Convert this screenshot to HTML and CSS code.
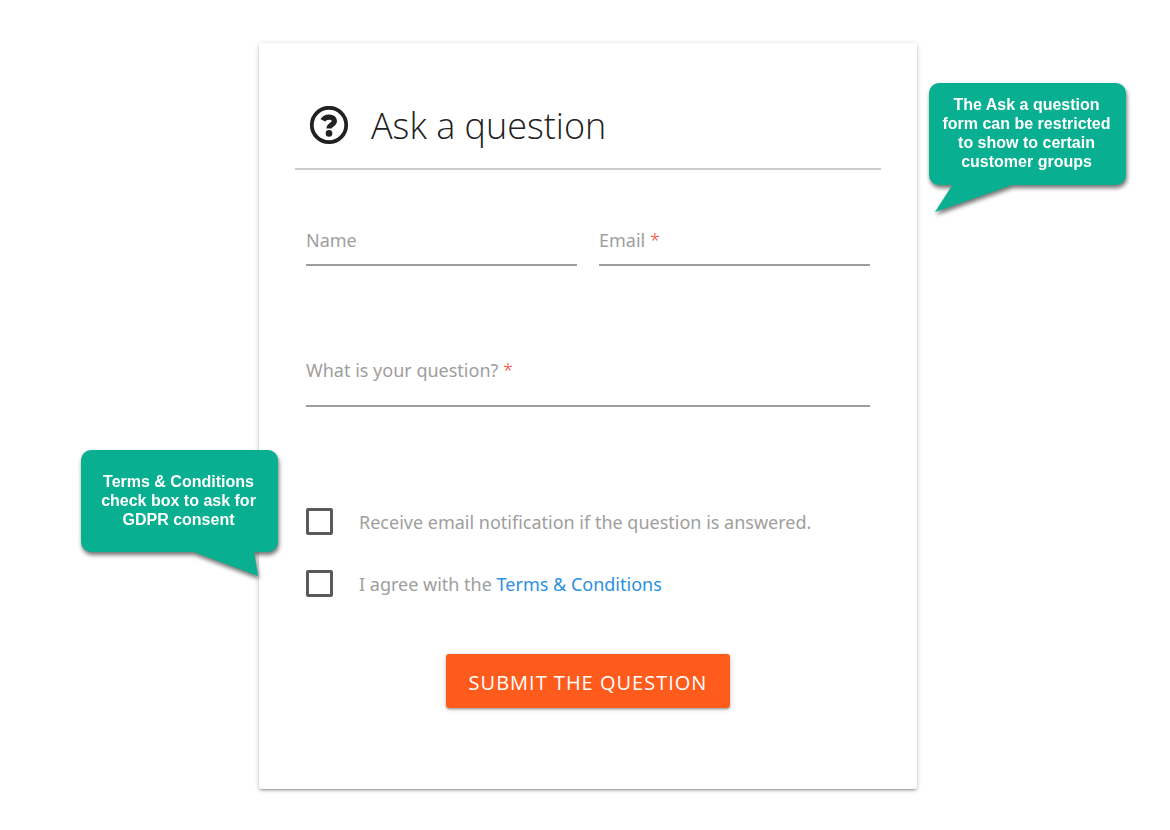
FILE: index.html
```
<!DOCTYPE html>
<html lang="en">
<head>
    <meta charset="UTF-8">
    <meta name="viewport" content="width=device-width, initial-scale=1.0">
    <title>Ask a question</title>
    <link rel="stylesheet" href="styles.css">
</head>
<body>
    <main class="stage">
        <form class="card">
            <h1 class="header">
                <svg class="header-icon" viewBox="0 0 40 40" aria-hidden="true">
                    <circle cx="20" cy="19" r="17.2" fill="none" stroke="#212121" stroke-width="3.8"/>
                    <path d="M13.9 14.4C15.2 11.8 17.2 11.1 20 11.1C23.4 11.1 25.4 12.6 25.4 15C25.4 18.8 20 18.4 20 22.6" fill="none" stroke="#212121" stroke-width="5.2"/>
                    <circle cx="20" cy="27.4" r="3.3" fill="#212121"/>
                </svg>
                Ask a question
            </h1>

            <div class="fields">
                <div class="form-row">
                    <div class="form-group">
                        <label for="name">Name</label>
                        <input type="text" id="name">
                    </div>
                    <div class="form-group">
                        <label for="email">Email <span class="required">*</span></label>
                        <input type="email" id="email">
                    </div>
                </div>
                <div class="form-group">
                    <label for="question">What is your question? <span class="required">*</span></label>
                    <textarea id="question" rows="1"></textarea>
                </div>

                <div class="checks">
                    <div class="check">
                        <input type="checkbox" id="notify">
                        <label for="notify">Receive email notification if the question is answered.</label>
                    </div>
                    <div class="check">
                        <input type="checkbox" id="terms">
                        <label for="terms">I agree with the <a href="#terms">Terms &amp; Conditions</a></label>
                    </div>
                </div>

                <button type="submit">SUBMIT THE QUESTION</button>
            </div>
        </form>

        <aside class="callout callout-groups">The Ask a question<br>form can be restricted<br>to show to certain<br>customer groups</aside>
        <aside class="callout callout-gdpr">Terms &amp; Conditions<br>check box to ask for<br>GDPR consent</aside>
    </main>
</body>
</html>
```
FILE: styles.css
```
* { box-sizing: border-box; }
body { margin: 0; padding: 43px 0 40px 6px; background: #fff; color: #9e9e9e; font-family: "Segoe UI", "Noto Sans", sans-serif; font-size: 18px; line-height: 24px; }
.stage { position: relative; max-width: 658px; margin: 0 auto; }

.card { padding: 48px 36px 81px; background: #fff; border-radius: 3px; box-shadow: 0 2px 2px rgba(0,0,0,0.14), 0 3px 1px -2px rgba(0,0,0,0.12), 0 1px 5px rgba(0,0,0,0.2); }
.header { display: flex; align-items: center; gap: 22px; height: 79px; margin: 0; padding: 0 0 7px 14px; border-bottom: 2px solid #ccc; color: #212121; font-family: "Segoe UI", "Open Sans", sans-serif; font-size: 36px; font-weight: 300; line-height: 48px; }
.header-icon { width: 40px; height: 40px; }

.fields { padding: 46px 11px 0; }
.form-row { display: flex; gap: 22px; margin-bottom: 80px; }
.form-group { position: relative; flex: 1; }
.form-group label { position: absolute; top: 12px; left: 0; cursor: text; }
.form-group input, .form-group textarea { display: block; width: 100%; height: 50px; padding: 12px 0; border: 0; border-bottom: 2px solid #9e9e9e; border-radius: 0; outline: none; background: transparent; font: inherit; resize: none; overflow: hidden; }
.form-group textarea { height: 61px; }
.required { color: #f44336; font-weight: 300; }

.checks { display: grid; gap: 34px; margin: 100px 0 57px; }
.check { display: flex; align-items: center; gap: 26px; height: 28px; }
.check label { padding-top: 2px; }
.check input { appearance: none; width: 27px; height: 27px; margin: 0; border: 3px solid #5a5a5a; border-radius: 2px; }
.check input:checked { background: #5a5a5a; }
a { color: #2b90e0; text-decoration: none; }

button { display: block; height: 54px; margin: 0 auto; padding: 2px 23px 0; border: 0; border-radius: 3px; background: #ff5b1d; color: #fff; font-family: "Segoe UI", "Open Sans", sans-serif; font-size: 20px; letter-spacing: 1px; cursor: pointer; box-shadow: 0 2px 2px rgba(0,0,0,0.14), 0 3px 1px -2px rgba(0,0,0,0.12), 0 1px 5px rgba(0,0,0,0.2); }
button:hover { background: #ff6d35; }

.callout { position: absolute; display: flex; align-items: center; justify-content: center; width: 197px; height: 102px; padding: 0 2px 2px 0; border-radius: 10px; background: #08af90; color: #fff; font: bold 16px/19px "Liberation Sans", Arial, sans-serif; text-align: center; filter: drop-shadow(1px 3px 2px rgba(0,0,0,0.55)); }
.callout::after { content: ""; position: absolute; top: 101px; background: #08af90; }
.callout-groups { top: 40px; left: 670px; }
.callout-groups::after { left: 6px; width: 80px; height: 28px; clip-path: polygon(18px 0, 100% 0, 0 100%); }
.callout-gdpr { top: 407px; left: -178px; }
.callout-gdpr::after { left: 110px; width: 67px; height: 25px; clip-path: polygon(0 0, 63px 0, 100% 100%); }
```
